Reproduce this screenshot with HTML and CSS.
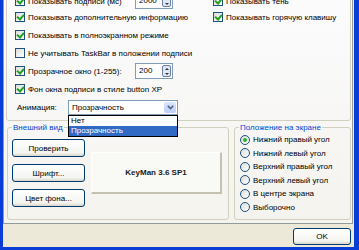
FILE: index.html
```html
<!DOCTYPE html>
<html lang="ru">
<head>
    <meta charset="UTF-8">
    <meta name="viewport" content="width=device-width, initial-scale=1.0">
    <title>KeyMan - Настройки</title>
    <link rel="stylesheet" href="styles.css">
</head>
<body>
    <div class="window">
        <div class="tab-page">
            <div class="opts">
                <div class="opt"><span class="cb on"></span>Показывать подписи (мс)</div>
                <div class="spin"><span class="spin-val">2000</span><span class="spin-btns"><span class="up"></span><span class="down"></span></span></div>
                <div class="opt"><span class="cb on"></span>Показывать тень</div>

                <div class="opt wide"><span class="cb on"></span>Показывать дополнительную информацию</div>
                <div class="opt"><span class="cb on"></span>Показывать горячую клавишу</div>

                <div class="opt full"><span class="cb on"></span>Показывать в полноэкранном режиме</div>
                <div class="opt full"><span class="cb"></span>Не учитывать TaskBar в положении подписи</div>

                <div class="opt"><span class="cb on"></span>Прозрачное окно (1-255):</div>
                <div class="spin"><span class="spin-val">200</span><span class="spin-btns"><span class="up"></span><span class="down"></span></span></div>

                <div class="opt full"><span class="cb on"></span>Фон окна подписи в стиле button XP</div>

                <div class="anim full">
                    <span class="anim-label">Анимация:</span>
                    <div class="select">
                        <span class="select-val">Прозрачность</span>
                        <span class="select-btn">
                            <svg width="7" height="5" viewBox="0 0 7 5"><path d="M0.8 0.8 L3.5 3.6 L6.2 0.8" fill="none" stroke="#4d6185" stroke-width="1.6"/></svg>
                        </span>
                        <div class="dropdown">
                            <div class="dd-item">Нет</div>
                            <div class="dd-item selected">Прозрачность</div>
                        </div>
                    </div>
                </div>
            </div>

            <div class="groups">
                <fieldset class="group look">
                    <legend>Внешний вид</legend>
                    <div class="look-body">
                        <div class="btn-col">
                            <button class="btn">Проверить</button>
                            <button class="btn">Шрифт...</button>
                            <button class="btn">Цвет фона...</button>
                        </div>
                        <div class="preview">KeyMan 3.6 SP1</div>
                    </div>
                </fieldset>
                <fieldset class="group place">
                    <legend>Положение на экране</legend>
                    <div class="radio-list">
                        <div class="radio-row"><span class="rb on"></span>Нижний правый угол</div>
                        <div class="radio-row"><span class="rb"></span>Нижний левый угол</div>
                        <div class="radio-row"><span class="rb"></span>Верхний правый угол</div>
                        <div class="radio-row"><span class="rb"></span>Верхний левый угол</div>
                        <div class="radio-row"><span class="rb"></span>В центре экрана</div>
                        <div class="radio-row"><span class="rb"></span>Выборочно</div>
                    </div>
                </fieldset>
            </div>
        </div>

        <div class="footer">
            <button class="btn ok">OK</button>
        </div>
    </div>
</body>
</html>
```

FILE: styles.css
```css
* {
    box-sizing: border-box;
}

body {
    margin: 0;
    background: #ece9d8;
    font-family: 'Liberation Sans', Arial, sans-serif;
    font-size: 8px;
    color: #000;
}

.window {
    width: 359px;
    height: 250px;
    overflow: hidden;
    background: #ece9d8;
    border-left: 3px solid #0a3cd6;
    border-right: 5px solid #0a3cd6;
    border-bottom: 3px solid #0a3cd6;
    display: flex;
    flex-direction: column;
}

.tab-page {
    margin: -20px 1px 0 0;
    padding: 2px 1px 2px 2px;
    border: 1px solid #919b9c;
    background: linear-gradient(#fcfcfe, #f4f3ee);
}

/* first row is partly hidden under the top edge */
.opts {
    display: grid;
    grid-template-columns: 120px 78px 1fr;
    grid-template-rows: 14px;
    grid-auto-rows: 18px;
    padding: 10px 0 4px 8px;
    border: 1px solid #d0d0bf;
    border-radius: 3px;
}

.opt {
    display: flex;
    align-items: center;
    white-space: nowrap;
}

.wide {
    grid-column: span 2;
}

.full {
    grid-column: 1 / -1;
}

.cb {
    position: relative;
    width: 10px;
    height: 10px;
    margin-right: 3px;
    border: 1px solid #1c5180;
    background: linear-gradient(135deg, #dcdcd7, #fff);
    flex-shrink: 0;
}

.cb.on::after {
    content: '';
    position: absolute;
    left: 2px;
    top: 0;
    width: 3px;
    height: 5px;
    border-right: 2px solid #21a121;
    border-bottom: 2px solid #21a121;
    transform: rotate(40deg);
}

.spin {
    align-self: center;
    display: flex;
    width: 38px;
    height: 16px;
    border: 1px solid #7f9db9;
    background: #fff;
}

.spin-val {
    flex: 1;
    padding-left: 3px;
    line-height: 14px;
}

.spin-btns {
    width: 9px;
    margin: 1px;
    display: flex;
    flex-direction: column;
    border: 1px solid #6d7f9f;
    border-radius: 2px;
    background: #dfe6f5;
}

.spin-btns span {
    flex: 1;
    display: flex;
    align-items: center;
    justify-content: center;
}

.spin-btns .up::after {
    content: '';
    border-left: 2px solid transparent;
    border-right: 2px solid transparent;
    border-bottom: 2px solid #333;
}

.spin-btns .down::after {
    content: '';
    border-left: 2px solid transparent;
    border-right: 2px solid transparent;
    border-top: 2px solid #333;
}

.anim {
    display: flex;
    align-items: center;
    padding-left: 2px;
}

.anim-label {
    width: 51px;
}

.select {
    position: relative;
    display: flex;
    width: 110px;
    height: 15px;
    border: 1px solid #7f9db9;
    background: #fff;
}

.select-val {
    flex: 1;
    padding-left: 3px;
    line-height: 13px;
}

.select-btn {
    width: 12px;
    margin: 1px 1px 1px 0;
    display: flex;
    align-items: center;
    justify-content: center;
    border-radius: 2px;
    background: linear-gradient(#dce6fc, #bccef8);
}

.dropdown {
    position: absolute;
    z-index: 2;
    top: calc(100% + 1px);
    left: -1px;
    right: -1px;
    border: 1px solid #000;
    background: #fff;
}

.dd-item {
    height: 10px;
    line-height: 10px;
    padding-left: 2px;
}

.dd-item.selected {
    background: #316ac5;
    color: #fff;
}

.groups {
    display: flex;
    gap: 5px;
    padding: 1px 0 1px 1px;
}

.group {
    margin: 0;
    padding: 0 4px;
    min-width: 0;
    border: 1px solid #d0d0bf;
    border-radius: 3px;
}

.group legend {
    padding: 0 1px;
    color: #0046d5;
    line-height: 11px;
}

.look {
    width: 222px;
}

.place {
    width: 117px;
}

.look-body {
    display: flex;
    align-items: center;
    gap: 6px;
    padding: 6px 2px 11px 0;
}

.btn-col {
    display: flex;
    flex-direction: column;
    gap: 7px;
}

.btn {
    width: 73px;
    height: 18px;
    padding: 0;
    border: 1px solid #003c74;
    border-radius: 3px;
    background: linear-gradient(#fff, #f4f4f0 80%, #d8d4c8);
    font: inherit;
    color: #000;
}

.preview {
    width: 131px;
    height: 42px;
    display: flex;
    align-items: center;
    justify-content: center;
    background: #f9f9f6;
    border-top: 1px solid #fff;
    border-left: 1px solid #fff;
    border-right: 2px solid #c4c1b3;
    border-bottom: 2px solid #c4c1b3;
    font-weight: bold;
    color: #1a1a1a;
}

.radio-list {
    display: grid;
    grid-auto-rows: 13.5px;
    padding: 0 0 5px 1px;
}

.radio-row {
    display: flex;
    align-items: center;
    white-space: nowrap;
}

.rb {
    position: relative;
    width: 10px;
    height: 10px;
    margin-right: 3px;
    border: 1px solid #1c5180;
    border-radius: 50%;
    background: linear-gradient(135deg, #dcdcd7, #fff);
    flex-shrink: 0;
}

.rb.on::after {
    content: '';
    position: absolute;
    left: 2px;
    top: 2px;
    width: 4px;
    height: 4px;
    border-radius: 50%;
    background: #2bb52b;
}

.footer {
    display: flex;
    justify-content: flex-end;
    margin-top: 4px;
    padding-right: 3px;
}

.btn.ok {
    width: 58px;
    height: 17px;
}
```
